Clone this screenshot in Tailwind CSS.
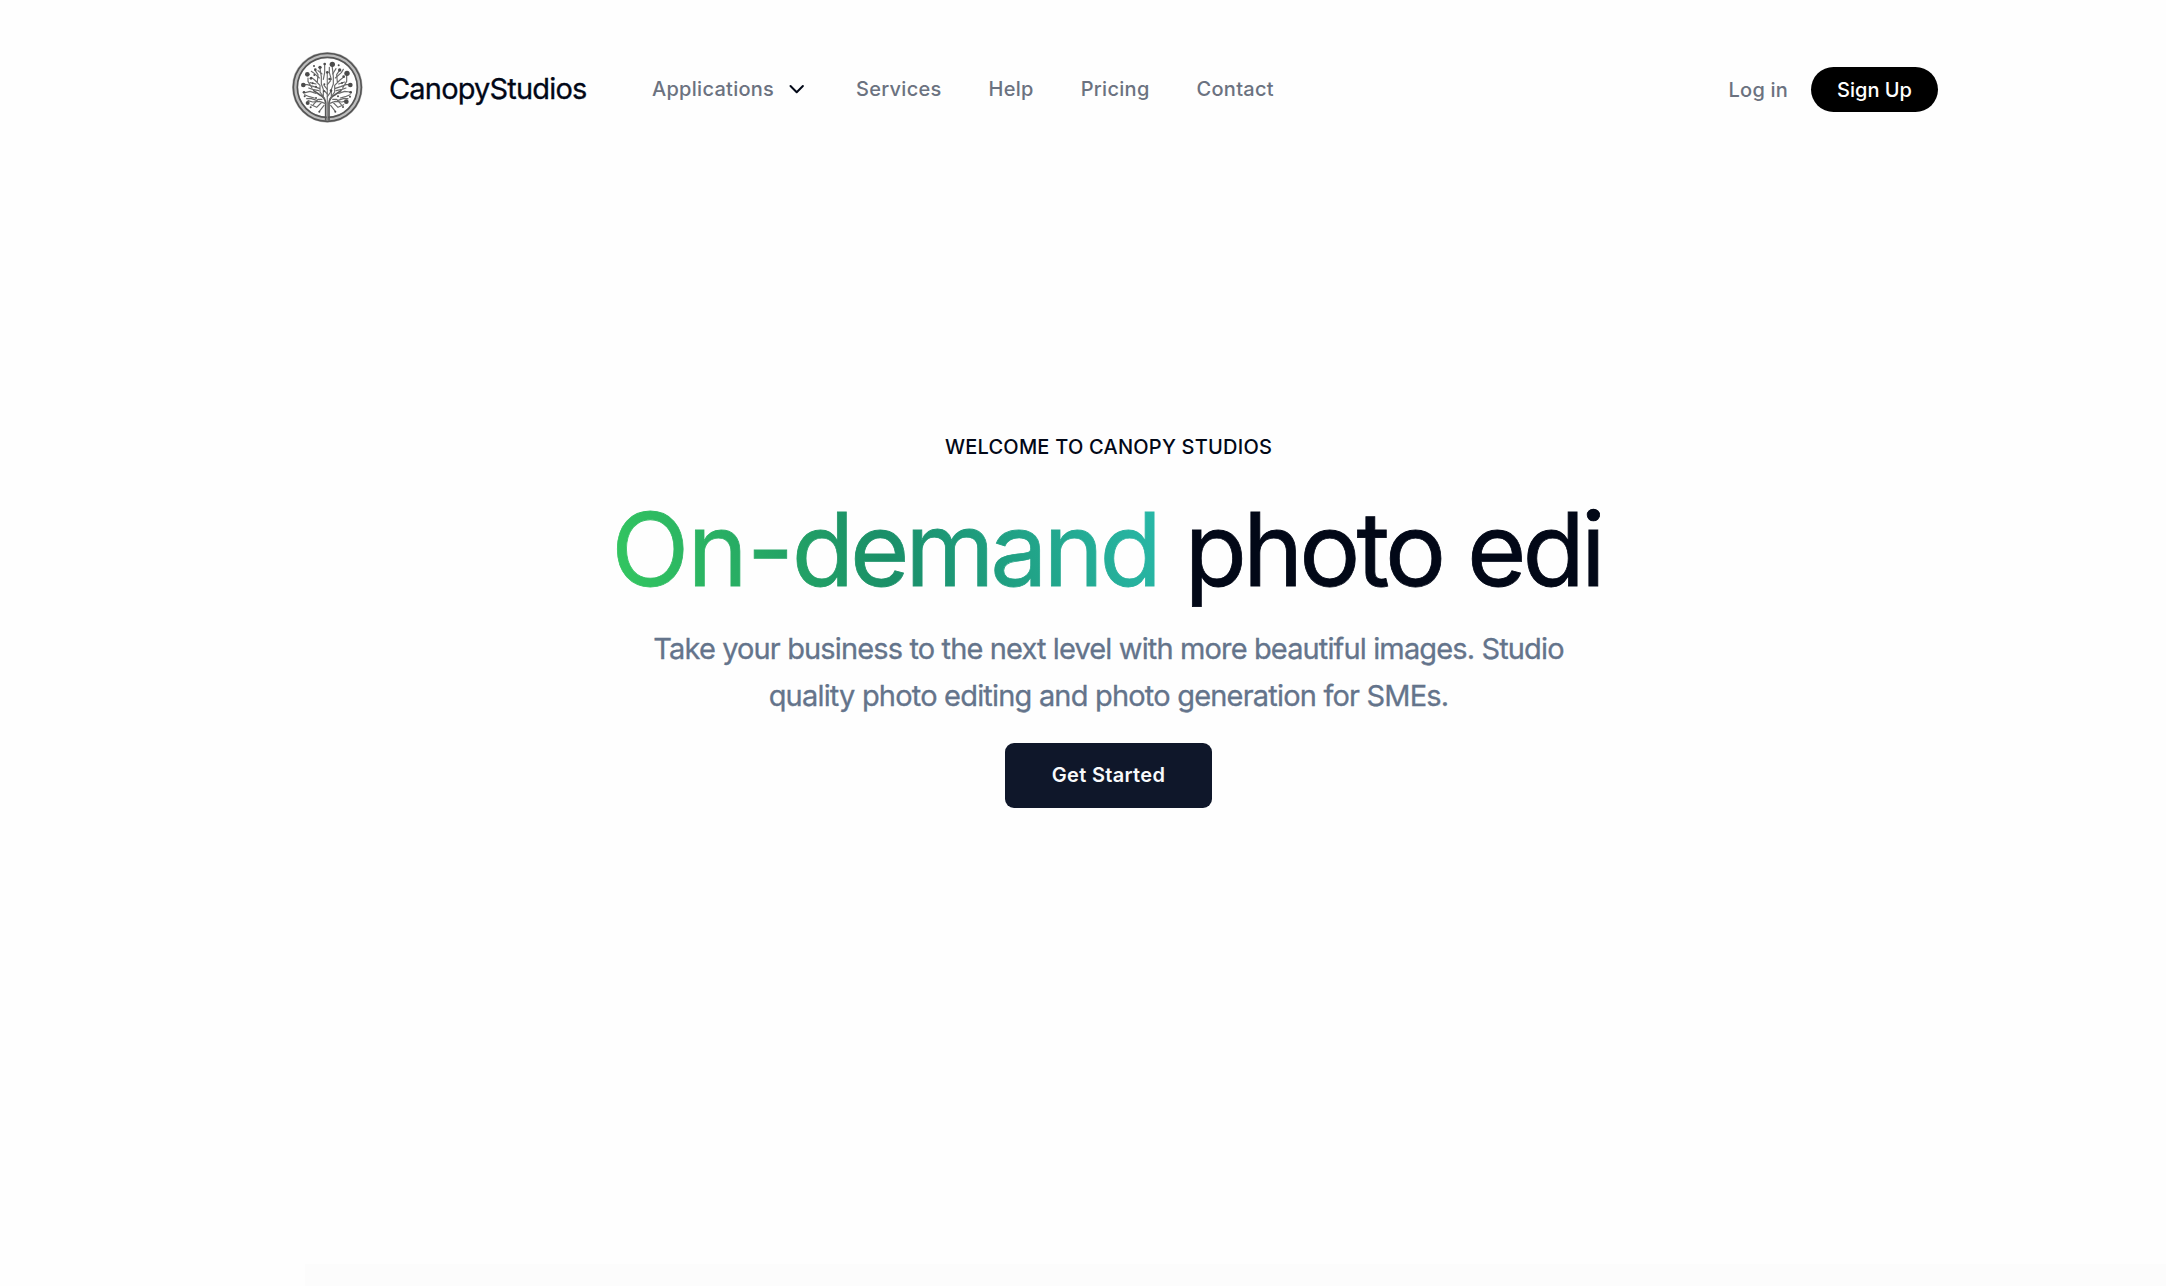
<!DOCTYPE html>
<html lang="en">
<head>
<meta charset="utf-8">
<title>CanopyStudios</title>
<script src="https://cdn.jsdelivr.net/npm/@tailwindcss/browser@4"></script>
</head>
<body class="flex h-screen flex-col overflow-hidden bg-[#fefefe] font-[Inter,sans-serif] text-[#020817]">
<header class="flex h-[178px] shrink-0 items-center pl-[292px] pr-[228px] text-xl font-medium text-[#6b7280]">
  <a class="flex items-center">
    <svg class="-mt-[3px] size-[71px]" viewBox="0 0 213 213" fill="none" stroke="#555" stroke-linecap="round" stroke-linejoin="round">
      <circle cx="106" cy="106" r="97" stroke="#bdbdbd" stroke-width="18"/>
      <circle cx="106" cy="106" r="102" stroke-width="5"/>
      <circle cx="106" cy="106" r="90" stroke-width="5"/>
      <!-- trunk -->
      <path d="M101 203V152Q99 137 84 129L65 116M111 203V152Q113 137 128 129L147 116" stroke-width="5"/>
      <path d="M106 203V64" stroke="#888" stroke-width="4"/>
      <!-- branches -->
      <g stroke="#6a6a6a" stroke-width="3.5">
        <path d="M101 155L82 148 62 150 48 146M90 150L74 166 57 158M96 160L82 178M98 140L84 120V100L68 84 58 76M84 110L66 104 46 98 34 98M72 124L54 118 40 122M76 90L78 68 70 56M94 136V112L88 96V74L84 50M94 82L98 62V38M60 108L48 88 48 78M67 138L52 134 38 128"/>
        <path d="M111 155L130 148 150 150 164 146M122 150L138 166 155 158M116 160L130 178M114 140L128 120V100L144 84 154 76M128 110L146 104 162 98 174 98M140 124L158 118 174 120M136 90L134 68 142 56M118 136V112L124 96V74L120 38M118 82L112 62V46M152 108L164 88V64M145 138L160 134 174 128"/>
        <path d="M106 112L96 100M106 98L116 86M106 126L97 116M106 134L116 120"/>
        <path d="M90 142L78 142 64 158M76 146L58 140 44 140M80 116L62 112 50 108M72 96L54 92M82 78L64 62 58 58M90 66L78 56M122 142L134 142 148 158M136 146L154 140 168 140M132 116L150 112 162 108M140 96L158 90M130 78L148 62 154 52M122 66L132 50"/>
      </g>
      <g fill="#4b4b4b" stroke="none">
        <circle cx="121" cy="37" r="8"/><circle cx="46" cy="67" r="7"/><circle cx="34" cy="99" r="7"/><circle cx="175" cy="99" r="7"/><circle cx="165" cy="64" r="8"/><circle cx="47" cy="153" r="6"/><circle cx="163" cy="149" r="7"/>
        <circle cx="98" cy="36" r="4"/><circle cx="84" cy="46" r="5"/><circle cx="70" cy="53" r="4"/><circle cx="143" cy="54" r="5"/><circle cx="155" cy="74" r="4"/><circle cx="57" cy="79" r="4"/><circle cx="36" cy="121" r="4"/><circle cx="176" cy="121" r="4"/><circle cx="38" cy="133" r="3"/><circle cx="174" cy="134" r="3"/><circle cx="82" cy="179" r="3"/><circle cx="130" cy="179" r="3"/><circle cx="56" cy="166" r="3"/><circle cx="153" cy="165" r="3"/><circle cx="106" cy="61" r="4"/><circle cx="113" cy="81" r="4"/><circle cx="97" cy="97" r="3"/><circle cx="117" cy="116" r="4"/><circle cx="96" cy="118" r="3"/><circle cx="62" cy="94" r="3"/><circle cx="150" cy="93" r="3"/><circle cx="72" cy="104" r="3"/><circle cx="140" cy="40" r="3"/><circle cx="66" cy="42" r="3"/><circle cx="67" cy="69" r="3"/><circle cx="138" cy="133" r="3"/><circle cx="72" cy="138" r="3"/>
      </g>
    </svg>
    <span class="-mt-[2px] ml-[26px] w-[263px] text-[29px] leading-none font-normal tracking-[-0.82px] text-[#020817] [-webkit-text-stroke:0.3px]">CanopyStudios</span>
  </a>
  <nav class="flex items-center gap-[47px] tracking-[0.28px]">
    <a class="flex w-[157px] items-center justify-between">Applications
      <svg class="mr-[3px] h-5 w-[19px]" viewBox="0 0 19 20" fill="none" stroke="#020817" stroke-width="2" stroke-linecap="round" stroke-linejoin="round"><path d="M3.5 7L9.7 13.2 15.9 7"/></svg>
    </a>
    <a>Services</a><a>Help</a><a>Pricing</a><a>Contact</a>
  </nav>
  <div class="ml-auto flex items-center gap-[23px] pt-px">
    <a class="tracking-[0.2px]">Log in</a>
    <a class="flex h-[45px] w-[127px] items-center justify-center rounded-full bg-black text-white">Sign Up</a>
  </div>
</header>
<main class="flex flex-1 flex-col items-center pt-[255px] pl-[51px] text-center">
  <p class="h-7 text-xl font-medium tracking-[0.23px]">WELCOME TO CANOPY STUDIOS</p>
  <h1 class="mt-[38px] mb-0.5 flex pr-1 text-[102px] leading-[100px] font-normal whitespace-pre [-webkit-text-stroke:0.8px]"><span class="bg-[linear-gradient(75deg,#34c860,#1a8f68_50%,#28b8a8)] bg-clip-text tracking-[-4.2px] text-transparent"><span class="tracking-[-1.8px]">On</span><span class="mr-[2px] ml-[1px]">-</span>demand</span><span class="ml-[2px] tracking-[-3.95px]"> photo edi</span></h1>
  <p class="mt-6 text-[29px] leading-[47px] tracking-[-0.87px] text-[#64748b] [-webkit-text-stroke:0.3px]">Take your business to the next level with more beautiful images. Studio<br><span class="tracking-[-0.81px]">quality photo editing and photo generation for SMEs.</span></p>
  <button class="mt-6 h-[65px] w-[207px] rounded-[9px] bg-[#0f172a] pb-0.5 text-xl font-semibold tracking-[0.3px] text-[#f8fafc]">Get Started</button>
</main>
<footer class="ml-[305px] h-[22px] shrink-0 bg-[#fcfcfc]"></footer>
</body>
</html>
